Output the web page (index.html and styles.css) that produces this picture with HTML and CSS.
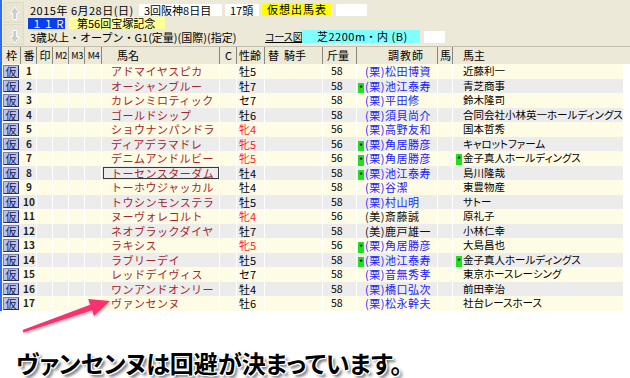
FILE: index.html
```html
<!DOCTYPE html>
<html lang="ja">
<head>
<meta charset="utf-8">
<title>仮想出馬表</title>
<link rel="stylesheet" href="styles.css">
</head>
<body>
<div class="app">
  <div class="top">
    <div class="nav">
      <div class="navbtn"><svg width="20" height="21" viewBox="0 0 20 21"><polygon points="10.7,5 6,11 8.8,11 8.8,17.5 12.6,17.5 12.6,11 15.4,11" fill="#cccccc" stroke="#fbfbfb" stroke-width="1"/></svg></div>
      <div class="navbtn"><svg width="20" height="21" viewBox="0 0 20 21"><polygon points="10.7,19 6,13 8.8,13 8.8,6.5 12.6,6.5 12.6,13 15.4,13" fill="#cccccc" stroke="#fbfbfb" stroke-width="1"/></svg></div>
    </div>
    <div class="info">
      <div class="line l1">
        <span class="date">2015年 6月28日(日)</span>
        <span class="box w1">3回阪神8日目</span>
        <span class="box w2">17頭</span>
        <span class="box yel">仮想出馬表</span>
        <span class="box w3"></span>
      </div>
      <div class="line l2">
        <span class="box race">１１Ｒ</span>
        <span class="box title">第56回宝塚記念</span>
      </div>
      <div class="line l3">
        <span class="cond">3歳以上・オープン・G1(定量)(国際)(指定)</span>
        <span class="course">コース図</span>
        <span class="box cyan">芝2200m・内 (B)</span>
        <span class="box w4"></span>
      </div>
    </div>
  </div>

  <div class="grid head">
    <div class="h c-waku">枠</div>
    <div class="h c-num">番</div>
    <div class="h c-mark">印</div>
    <div class="h c-m sm">M2</div>
    <div class="h c-m sm">M3</div>
    <div class="h c-m sm">M4</div>
    <div class="h c-name">馬名</div>
    <div class="h c-c">C</div>
    <div class="h c-sex">性齢</div>
    <div class="h c-jockey">替&nbsp;&nbsp;騎手</div>
    <div class="h c-wt">斤量</div>
    <div class="h c-tr">調教師</div>
    <div class="h c-hm">馬</div>
    <div class="h c-own">馬主</div>
  </div>

  <div class="rows">
    <div class="grid row odd"><div class="d"><span class="waku">仮</span></div><div class="d num">1</div><div class="d"></div><div class="d"></div><div class="d"></div><div class="d"></div><div class="d name">アドマイヤスピカ</div><div class="d"></div><div class="d sex">牡5</div><div class="d"></div><div class="d wt">58</div><div class="d tr"><i class="mk off"></i>(栗)松田博資</div><div class="d"></div><div class="d own"><i class="mk off"></i>近藤利一</div></div>
    <div class="grid row even"><div class="d"><span class="waku">仮</span></div><div class="d num">2</div><div class="d"></div><div class="d"></div><div class="d"></div><div class="d"></div><div class="d name">オーシャンブルー</div><div class="d"></div><div class="d sex">牡7</div><div class="d"></div><div class="d wt">58</div><div class="d tr"><i class="mk">*</i>(栗)池江泰寿</div><div class="d"></div><div class="d own"><i class="mk off"></i>青芝商事</div></div>
    <div class="grid row odd"><div class="d"><span class="waku">仮</span></div><div class="d num">3</div><div class="d"></div><div class="d"></div><div class="d"></div><div class="d"></div><div class="d name">カレンミロティック</div><div class="d"></div><div class="d sex">セ7</div><div class="d"></div><div class="d wt">58</div><div class="d tr"><i class="mk off"></i>(栗)平田修</div><div class="d"></div><div class="d own"><i class="mk off"></i>鈴木隆司</div></div>
    <div class="grid row even"><div class="d"><span class="waku">仮</span></div><div class="d num">4</div><div class="d"></div><div class="d"></div><div class="d"></div><div class="d"></div><div class="d name">ゴールドシップ</div><div class="d"></div><div class="d sex">牡6</div><div class="d"></div><div class="d wt">58</div><div class="d tr"><i class="mk off"></i>(栗)須貝尚介</div><div class="d"></div><div class="d own"><i class="mk off"></i>合同会社小林英一ホールディングス</div></div>
    <div class="grid row odd"><div class="d"><span class="waku">仮</span></div><div class="d num">5</div><div class="d"></div><div class="d"></div><div class="d"></div><div class="d"></div><div class="d name">ショウナンパンドラ</div><div class="d"></div><div class="d sex f">牝4</div><div class="d"></div><div class="d wt">56</div><div class="d tr"><i class="mk off"></i>(栗)高野友和</div><div class="d"></div><div class="d own"><i class="mk off"></i>国本哲秀</div></div>
    <div class="grid row even"><div class="d"><span class="waku">仮</span></div><div class="d num">6</div><div class="d"></div><div class="d"></div><div class="d"></div><div class="d"></div><div class="d name">ディアデラマドレ</div><div class="d"></div><div class="d sex f">牝5</div><div class="d"></div><div class="d wt">56</div><div class="d tr"><i class="mk">*</i>(栗)角居勝彦</div><div class="d"></div><div class="d own"><i class="mk off"></i>キャロットファーム</div></div>
    <div class="grid row odd"><div class="d"><span class="waku">仮</span></div><div class="d num">7</div><div class="d"></div><div class="d"></div><div class="d"></div><div class="d"></div><div class="d name">デニムアンドルビー</div><div class="d"></div><div class="d sex f">牝5</div><div class="d"></div><div class="d wt">56</div><div class="d tr"><i class="mk">*</i>(栗)角居勝彦</div><div class="d"></div><div class="d own"><i class="mk">*</i>金子真人ホールディングス</div></div>
    <div class="grid row even"><div class="d"><span class="waku">仮</span></div><div class="d num">8</div><div class="d"></div><div class="d"></div><div class="d"></div><div class="d"></div><div class="d name focus">トーセンスターダム</div><div class="d"></div><div class="d sex">牡4</div><div class="d"></div><div class="d wt">58</div><div class="d tr"><i class="mk">*</i>(栗)池江泰寿</div><div class="d"></div><div class="d own"><i class="mk off"></i>島川隆哉</div></div>
    <div class="grid row odd"><div class="d"><span class="waku">仮</span></div><div class="d num">9</div><div class="d"></div><div class="d"></div><div class="d"></div><div class="d"></div><div class="d name">トーホウジャッカル</div><div class="d"></div><div class="d sex">牡4</div><div class="d"></div><div class="d wt">58</div><div class="d tr"><i class="mk off"></i>(栗)谷潔</div><div class="d"></div><div class="d own"><i class="mk off"></i>東豊物産</div></div>
    <div class="grid row even"><div class="d"><span class="waku">仮</span></div><div class="d num">10</div><div class="d"></div><div class="d"></div><div class="d"></div><div class="d"></div><div class="d name">トウシンモンステラ</div><div class="d"></div><div class="d sex">牡5</div><div class="d"></div><div class="d wt">58</div><div class="d tr"><i class="mk off"></i>(栗)村山明</div><div class="d"></div><div class="d own"><i class="mk off"></i>サトー</div></div>
    <div class="grid row odd"><div class="d"><span class="waku">仮</span></div><div class="d num">11</div><div class="d"></div><div class="d"></div><div class="d"></div><div class="d"></div><div class="d name">ヌーヴォレコルト</div><div class="d"></div><div class="d sex f">牝4</div><div class="d"></div><div class="d wt">56</div><div class="d tr bk"><i class="mk off"></i>(美)斎藤誠</div><div class="d"></div><div class="d own"><i class="mk off"></i>原礼子</div></div>
    <div class="grid row even"><div class="d"><span class="waku">仮</span></div><div class="d num">12</div><div class="d"></div><div class="d"></div><div class="d"></div><div class="d"></div><div class="d name">ネオブラックダイヤ</div><div class="d"></div><div class="d sex">牡7</div><div class="d"></div><div class="d wt">58</div><div class="d tr bk"><i class="mk off"></i>(美)鹿戸雄一</div><div class="d"></div><div class="d own"><i class="mk off"></i>小林仁幸</div></div>
    <div class="grid row odd"><div class="d"><span class="waku">仮</span></div><div class="d num">13</div><div class="d"></div><div class="d"></div><div class="d"></div><div class="d"></div><div class="d name">ラキシス</div><div class="d"></div><div class="d sex f">牝5</div><div class="d"></div><div class="d wt">56</div><div class="d tr"><i class="mk">*</i>(栗)角居勝彦</div><div class="d"></div><div class="d own"><i class="mk off"></i>大島昌也</div></div>
    <div class="grid row even"><div class="d"><span class="waku">仮</span></div><div class="d num">14</div><div class="d"></div><div class="d"></div><div class="d"></div><div class="d"></div><div class="d name">ラブリーデイ</div><div class="d"></div><div class="d sex">牡5</div><div class="d"></div><div class="d wt">58</div><div class="d tr"><i class="mk">*</i>(栗)池江泰寿</div><div class="d"></div><div class="d own"><i class="mk">*</i>金子真人ホールディングス</div></div>
    <div class="grid row odd"><div class="d"><span class="waku">仮</span></div><div class="d num">15</div><div class="d"></div><div class="d"></div><div class="d"></div><div class="d"></div><div class="d name">レッドデイヴィス</div><div class="d"></div><div class="d sex">セ7</div><div class="d"></div><div class="d wt">58</div><div class="d tr"><i class="mk off"></i>(栗)音無秀孝</div><div class="d"></div><div class="d own"><i class="mk off"></i>東京ホースレーシング</div></div>
    <div class="grid row even"><div class="d"><span class="waku">仮</span></div><div class="d num">16</div><div class="d"></div><div class="d"></div><div class="d"></div><div class="d"></div><div class="d name">ワンアンドオンリー</div><div class="d"></div><div class="d sex">牡4</div><div class="d"></div><div class="d wt">58</div><div class="d tr"><i class="mk off"></i>(栗)橋口弘次</div><div class="d"></div><div class="d own"><i class="mk off"></i>前田幸治</div></div>
    <div class="grid row odd"><div class="d"><span class="waku">仮</span></div><div class="d num">17</div><div class="d"></div><div class="d"></div><div class="d"></div><div class="d"></div><div class="d name">ヴァンセンヌ</div><div class="d"></div><div class="d sex">牡6</div><div class="d"></div><div class="d wt">58</div><div class="d tr"><i class="mk off"></i>(栗)松永幹夫</div><div class="d"></div><div class="d own"><i class="mk off"></i>社台レースホース</div></div>
  </div>
</div>

<p class="note">ヴァンセンヌは回避が決まっています。</p>

<svg class="arrow" width="630" height="378" viewBox="0 0 630 378">
  <defs>
    <filter id="sh" x="-20%" y="-20%" width="140%" height="140%">
      <feDropShadow dx="1" dy="1.5" stdDeviation="1" flood-color="#000" flood-opacity="0.3"/>
    </filter>
  </defs>
  <polygon filter="url(#sh)" fill="#f7336e" points="22.6,330 90.1,304.7 88.2,299 110,301 94,316 92.1,310.3 23.4,332.4"/>
</svg>
</body>
</html>
```

FILE: styles.css
```css
html, body {
  margin: 0;
  padding: 0;
}
body {
  width: 630px;
  height: 378px;
  overflow: hidden;
  position: relative;
  background: #ffffff;
  font-family: "Noto Sans CJK JP", "Noto Sans", sans-serif;
  font-size: 11px;
  color: #000;
}

.app {
  border-left: 2px solid #2f6ee8;
  width: 628px;
}

/* ---------- top info panel ---------- */
.top {
  display: flex;
  height: 46px;
  background: #ece9d8;
  border-bottom: 1px solid #c4c0ad;
}
.nav {
  width: 24px;
  display: flex;
  flex-direction: column;
  gap: 1px;
  padding: 2px 0 0 2px;
}
.navbtn {
  width: 20px;
  height: 21px;
  background: #e8e5d3;
  border: 1px solid #dedbc9;
  box-sizing: border-box;
}
.navbtn svg { display: block; margin: -1px 0 0 -1px; }

.info {
  display: flex;
  flex-direction: column;
}
.line {
  display: flex;
  align-items: center;
  white-space: nowrap;
  line-height: 12px;
}
.l1 { height: 13px; margin-top: 3px; padding-left: 2px; }
.l2 { height: 12px; margin-top: 1px; }
.l3 { height: 13px; margin-top: 1px; padding-left: 2px; }

.line > span {
  display: inline-block;
  height: 12px;
  line-height: 12px;
  box-sizing: border-box;
}
.box { padding-left: 5px; }
.date { width: 109px; letter-spacing: 0.5px; }
.w1 { width: 83px; background: #fff; }
.w2 { width: 34px; background: #fff; margin-left: 3px; }
.line > .yel { width: 69px; background: #ffff00; margin-left: 3px; letter-spacing: 1px; height: 13px; line-height: 13px; }
.w3 { width: 31px; background: #fff; margin-left: 5px; }

.line > .race {
  width: 37px;
  height: 11px;
  line-height: 11px;
  background: #0a3cf0;
  color: #fff;
  font-size: 10px;
  letter-spacing: 1.5px;
  padding-left: 4px;
}
.title { width: 96px; background: #ffff99; margin-left: 4px; padding-left: 8px; }

.cond { width: 235px; }
.course { width: 37px; text-decoration: underline; font-size: 10px; font-feature-settings: "palt"; }
.cyan { width: 118px; background: #80ffff; padding-left: 15px; letter-spacing: 0.5px; }
.line > .cyan { height: 13px; line-height: 13px; }
.w4 { width: 21px; background: #fff; margin-left: 4px; }

/* ---------- grid ---------- */
.grid {
  display: grid;
  grid-template-columns: 19px 16px 16px 16px 16px 17px 118px 17px 28px 58px 34px 81px 15px 171px;
}

.head {
  height: 17px;
  background: #ece9d8;
  width: 628px;
  grid-template-columns: 19px 16px 16px 16px 16px 17px 118px 17px 28px 58px 34px 81px 15px 177px;
}
.h {
  line-height: 17px;
  height: 17px;
  box-shadow: inset -1px 0 0 #8a877a;
  text-align: center;
  white-space: nowrap;
  overflow: hidden;
}
.h.c-own { box-shadow: none; text-align: left; padding-left: 10px; }
.h.sm { font-size: 9px; letter-spacing: -0.3px; }
.h.c-name { text-align: left; padding-left: 15px; }
.h.c-jockey { text-align: left; padding-left: 3px; }
.h.c-sex { text-align: left; padding-left: 2px; }
.h.c-wt { text-align: left; padding-left: 4px; }
.h.c-tr { text-align: left; padding-left: 31px; letter-spacing: 1px; }
.h.c-hm { text-align: left; padding-left: 2px; }

.rows { width: 622px; }
.row { height: 14.5px; }
.row.odd { background: #fffce6; }
.row.even { background: #ececec; }
.d {
  height: 14.5px;
  line-height: 14.5px;
  box-shadow: inset -1px 0 0 #ffffff;
  white-space: nowrap;
  overflow: hidden;
  box-sizing: border-box;
}
.d:first-child { box-shadow: none; }

.waku {
  display: block;
  margin: 1px 0 0 1px;
  width: 16px;
  height: 12.5px;
  box-sizing: border-box;
  background: #b9c1f2;
  border: 1px solid;
  border-color: #7880b8 #2a2f60 #2a2f60 #7880b8;
  color: #1a1a40;
  font-size: 11px;
  line-height: 11px;
  text-align: center;
}

.num { text-align: center; font-size: 10px; font-weight: 700; color: #222; }
.name {
  color: #a3262a;
  padding-left: 9px;
  letter-spacing: 0.5px;
}
.name.focus {
  outline: 1px solid #3a3a3a;
  outline-offset: -2px;
}
.sex { padding-left: 2px; }
.sex.f { color: #ff1a1a; }
.wt { padding-left: 8px; font-size: 10.5px; }
.tr {
  color: #2222ff;
  padding-left: 1px;
  letter-spacing: 0.5px;
}
.tr.bk { color: #111; }
.own {
  padding-left: 3px;
  font-size: 10.5px;
  font-feature-settings: "palt";
}

.mk {
  display: inline-block;
  width: 6px;
  height: 11px;
  margin-right: 1px;
  vertical-align: -1px;
  background: #22dd22;
  color: #000;
  font-style: normal;
  font-size: 9px;
  line-height: 12px;
  text-align: center;
  letter-spacing: 0;
}
.mk.off { background: transparent; }

/* ---------- caption ---------- */
.note {
  margin: 38px 0 0 0;
  padding-left: 16px;
  height: 28px;
  font-size: 24px;
  line-height: 28px;
  font-weight: 700;
  font-feature-settings: "palt";
  white-space: nowrap;
  color: #000;
  text-shadow:
    -1px -1px 0 #fff, 1px -1px 0 #fff, -1px 1px 0 #fff, 1px 1px 0 #fff,
    0 -1px 0 #fff, 0 1px 0 #fff, -1px 0 0 #fff, 1px 0 0 #fff,
    3px 3px 3px rgba(0, 0, 0, 0.55);
}

.arrow {
  position: absolute;
  left: 0;
  top: 0;
  pointer-events: none;
}
```
